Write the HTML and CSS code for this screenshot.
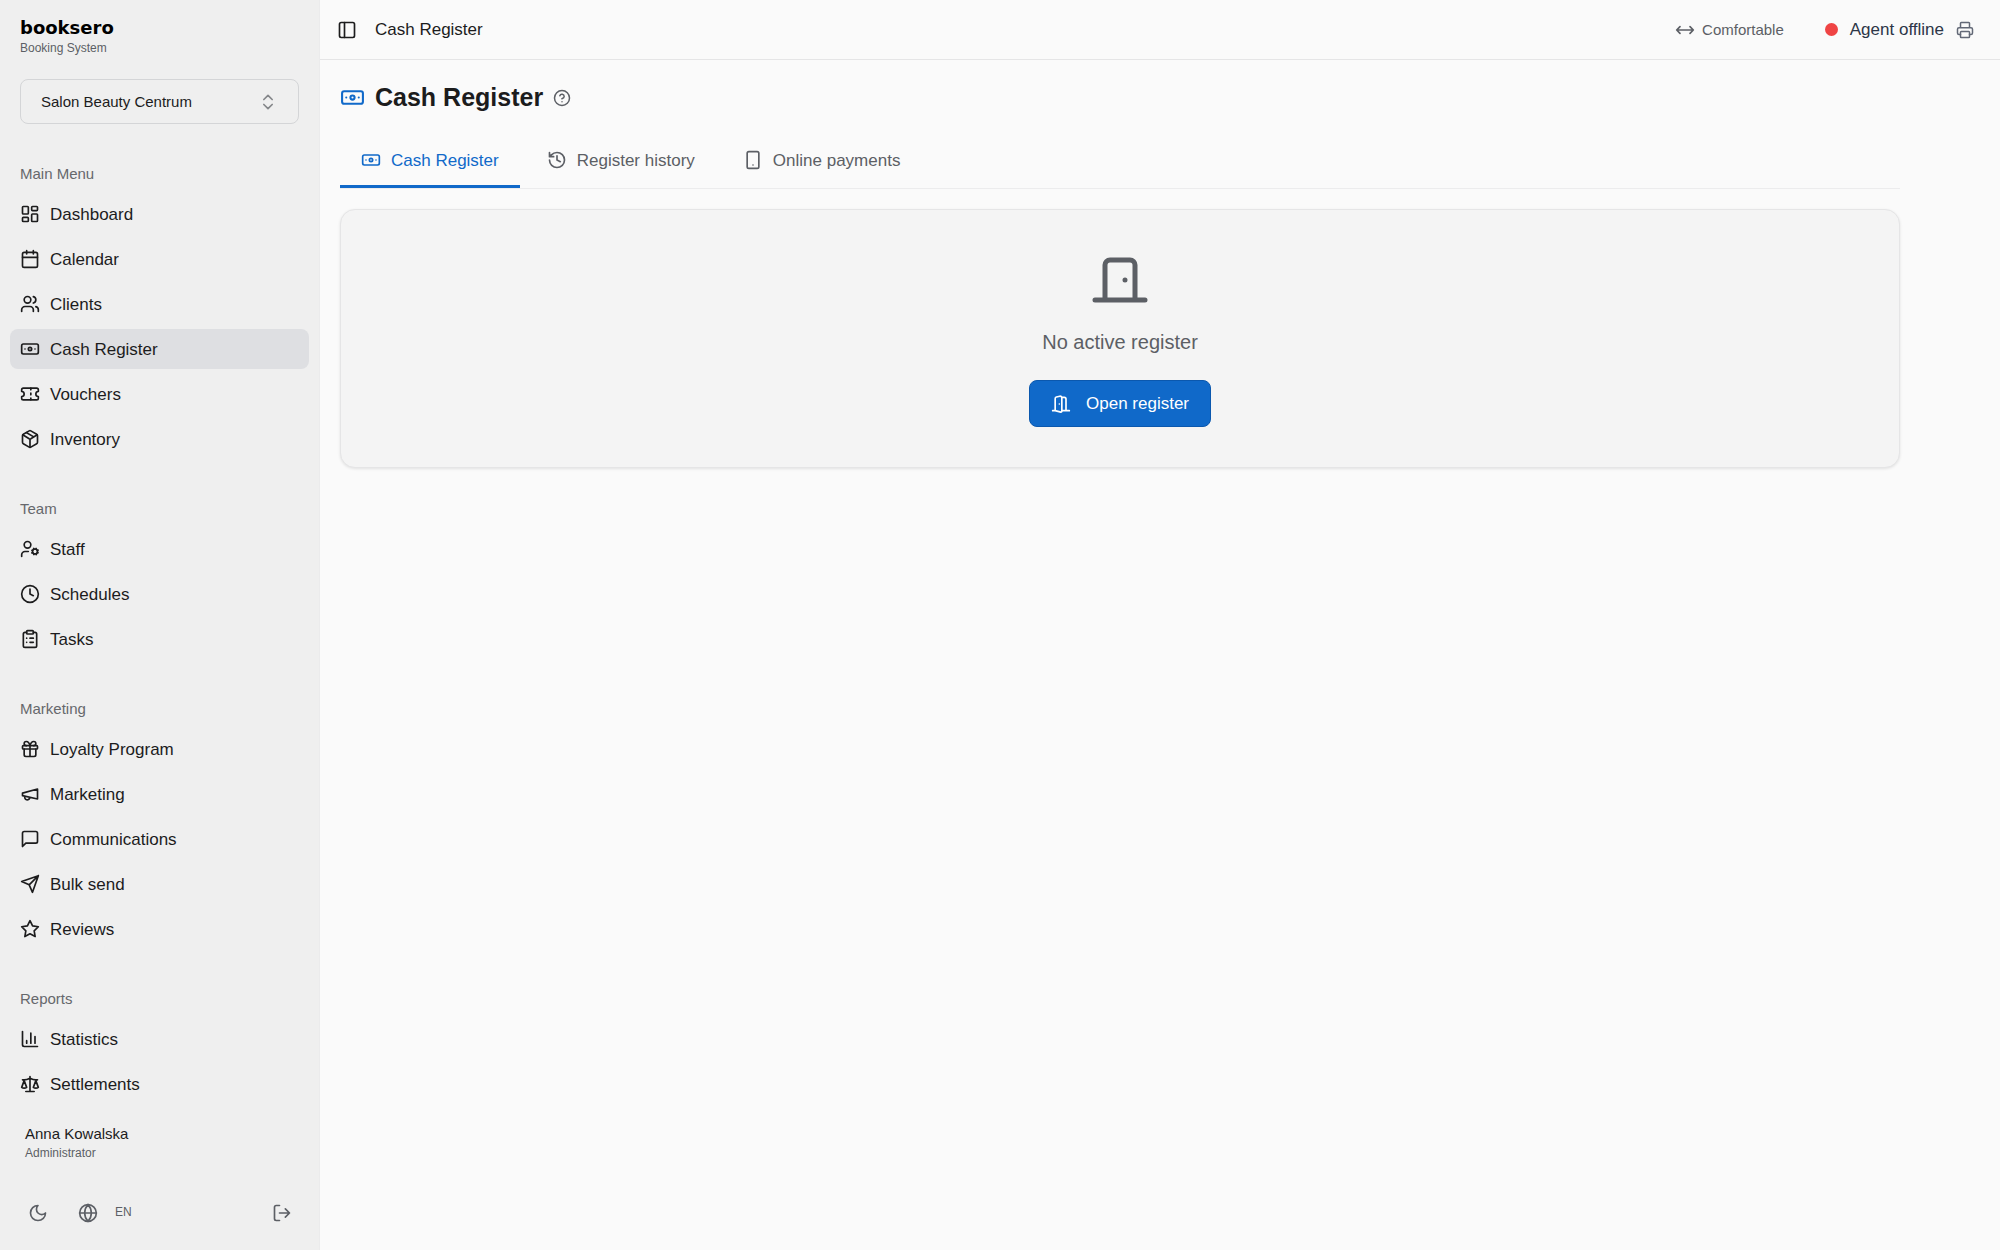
FILE: index.html
```html
<!DOCTYPE html>
<html lang="en">
<head>
<meta charset="utf-8">
<meta name="viewport" content="width=device-width, initial-scale=1">
<title>Cash Register</title>
<link rel="stylesheet" href="styles.css">
</head>
<body>
<svg class="sprite" aria-hidden="true">
  <symbol id="dashboard" viewBox="0 0 24 24"><rect width="7" height="9" x="3" y="3" rx="1"/><rect width="7" height="5" x="14" y="3" rx="1"/><rect width="7" height="9" x="14" y="12" rx="1"/><rect width="7" height="5" x="3" y="16" rx="1"/></symbol>
  <symbol id="calendar" viewBox="0 0 24 24"><path d="M8 2v4M16 2v4M3 10h18"/><rect width="18" height="18" x="3" y="4" rx="2"/></symbol>
  <symbol id="users" viewBox="0 0 24 24"><path d="M16 21v-2a4 4 0 0 0-4-4H6a4 4 0 0 0-4 4v2"/><circle cx="9" cy="7" r="4"/><path d="M22 21v-2a4 4 0 0 0-3-3.87M16 3.13a4 4 0 0 1 0 7.75"/></symbol>
  <symbol id="banknote" viewBox="0 0 24 24"><rect width="20" height="12" x="2" y="6" rx="2"/><circle cx="12" cy="12" r="2"/><path d="M6 12h.01M18 12h.01"/></symbol>
  <symbol id="ticket" viewBox="0 0 24 24"><path d="M2 9a3 3 0 0 1 0 6v2a2 2 0 0 0 2 2h16a2 2 0 0 0 2-2v-2a3 3 0 0 1 0-6V7a2 2 0 0 0-2-2H4a2 2 0 0 0-2 2Z"/><path d="M13 5v2M13 17v2M13 11v2"/></symbol>
  <symbol id="package" viewBox="0 0 24 24"><path d="M11 21.73a2 2 0 0 0 2 0l7-4A2 2 0 0 0 21 16V8a2 2 0 0 0-1-1.73l-7-4a2 2 0 0 0-2 0l-7 4A2 2 0 0 0 3 8v8a2 2 0 0 0 1 1.73z"/><path d="M12 22V12M3.3 7l7.703 4.734a2 2 0 0 0 1.994 0L20.7 7M7.5 4.27l9 5.15"/></symbol>
  <symbol id="user-cog" viewBox="0 0 24 24"><circle cx="18" cy="15" r="3"/><circle cx="9" cy="7" r="4"/><path d="M10 15H6a4 4 0 0 0-4 4v2M21.7 16.4l-.9-.3M15.2 13.9l-.9-.3M16.6 18.7l.3-.9M19.1 12.2l.3-.9M19.6 18.7l-.4-1M16.8 12.3l-.4-1M14.3 16.6l1-.4M20.7 13.8l1-.4"/></symbol>
  <symbol id="clock" viewBox="0 0 24 24"><circle cx="12" cy="12" r="10"/><path d="M12 6v6l4 2"/></symbol>
  <symbol id="clipboard" viewBox="0 0 24 24"><rect width="8" height="4" x="8" y="2" rx="1"/><path d="M16 4h2a2 2 0 0 1 2 2v14a2 2 0 0 1-2 2H6a2 2 0 0 1-2-2V6a2 2 0 0 1 2-2h2M12 11h4M12 16h4M8 11h.01M8 16h.01"/></symbol>
  <symbol id="gift" viewBox="0 0 24 24"><rect x="3" y="8" width="18" height="4" rx="1"/><path d="M12 8v13M19 12v7a2 2 0 0 1-2 2H7a2 2 0 0 1-2-2v-7M7.5 8a2.5 2.5 0 0 1 0-5A4.8 8 0 0 1 12 8a4.8 8 0 0 1 4.5-5 2.5 2.5 0 0 1 0 5"/></symbol>
  <symbol id="megaphone" viewBox="0 0 24 24"><path d="m3 11 18-5v12L3 14v-3zM11.6 16.8a3 3 0 1 1-5.8-1.6"/></symbol>
  <symbol id="message" viewBox="0 0 24 24"><path d="M21 15a2 2 0 0 1-2 2H7l-4 4V5a2 2 0 0 1 2-2h14a2 2 0 0 1 2 2z"/></symbol>
  <symbol id="send" viewBox="0 0 24 24"><path d="m22 2-7 20-4-9-9-4ZM22 2 11 13"/></symbol>
  <symbol id="star" viewBox="0 0 24 24"><path d="m12 2 3.09 6.26L22 9.27l-5 4.87 1.18 6.88L12 17.77l-6.18 3.25L7 14.14 2 9.27l6.91-1.01Z"/></symbol>
  <symbol id="chart" viewBox="0 0 24 24"><path d="M3 3v16a2 2 0 0 0 2 2h16M18 17V9M13 17V5M8 17v-3"/></symbol>
  <symbol id="scale" viewBox="0 0 24 24"><path d="m16 16 3-8 3 8c-.87.65-1.92 1-3 1s-2.13-.35-3-1ZM2 16l3-8 3 8c-.87.65-1.92 1-3 1s-2.13-.35-3-1ZM7 21h10M12 3v18M3 7h2c2 0 5-1 7-2 2 1 5 2 7 2h2"/></symbol>
  <symbol id="chevrons" viewBox="0 0 24 24"><path d="m7 15 5 5 5-5M7 9l5-5 5 5"/></symbol>
  <symbol id="moon" viewBox="0 0 24 24"><path d="M12 3a6 6 0 0 0 9 9 9 9 0 1 1-9-9Z"/></symbol>
  <symbol id="globe" viewBox="0 0 24 24"><circle cx="12" cy="12" r="10"/><path d="M12 2a14.5 14.5 0 0 0 0 20 14.5 14.5 0 0 0 0-20M2 12h20"/></symbol>
  <symbol id="logout" viewBox="0 0 24 24"><path d="M9 21H5a2 2 0 0 1-2-2V5a2 2 0 0 1 2-2h4M16 17l5-5-5-5M21 12H9"/></symbol>
  <symbol id="panel" viewBox="0 0 24 24"><rect width="18" height="18" x="3" y="3" rx="2"/><path d="M9 3v18"/></symbol>
  <symbol id="width" viewBox="0 0 24 24"><path d="m18 8 4 4-4 4M2 12h20M6 8l-4 4 4 4"/></symbol>
  <symbol id="printer" viewBox="0 0 24 24"><path d="M6 18H4a2 2 0 0 1-2-2v-5a2 2 0 0 1 2-2h16a2 2 0 0 1 2 2v5a2 2 0 0 1-2 2h-2M6 9V3a1 1 0 0 1 1-1h10a1 1 0 0 1 1 1v6"/><rect x="6" y="14" width="12" height="8" rx="1"/></symbol>
  <symbol id="help" viewBox="0 0 24 24"><circle cx="12" cy="12" r="10"/><path d="M9.09 9a3 3 0 0 1 5.83 1c0 2-3 3-3 3M12 17h.01"/></symbol>
  <symbol id="history" viewBox="0 0 24 24"><path d="M3 12a9 9 0 1 0 9-9 9.75 9.75 0 0 0-6.74 2.74L3 8M3 3v5h5M12 7v5l4 2"/></symbol>
  <symbol id="phone" viewBox="0 0 24 24"><rect width="14" height="20" x="5" y="2" rx="2"/><path d="M12 18h.01"/></symbol>
  <symbol id="door-closed" viewBox="0 0 24 24"><path d="M18 20V6a2 2 0 0 0-2-2H8a2 2 0 0 0-2 2v14M2 20h20M14 12v.01"/></symbol>
  <symbol id="door-open" viewBox="0 0 24 24"><path d="M13 4h3a2 2 0 0 1 2 2v14M2 20h3M13 20h9M10 12v.01M13 4.562v16.157a1 1 0 0 1-1.242.97L5 20V5.562a2 2 0 0 1 1.515-1.94l4-1A2 2 0 0 1 13 4.561Z"/></symbol>
</svg>

<div class="app">
  <aside class="sidebar">
    <div class="brand">
      <span class="brand-name">booksero</span>
      <span class="brand-sub">Booking System</span>
    </div>
    <div class="salon">
      <select class="salon-select" aria-label="Salon"><option>Salon Beauty Centrum</option></select>
      <svg class="icon salon-icon"><use href="#chevrons"/></svg>
    </div>
    <nav class="nav" aria-label="Main">
      <section class="group">
        <h2 class="group-title">Main Menu</h2>
        <ul class="group-list">
          <li><a class="nav-link" href="#"><svg class="icon"><use href="#dashboard"/></svg>Dashboard</a></li>
          <li><a class="nav-link" href="#"><svg class="icon"><use href="#calendar"/></svg>Calendar</a></li>
          <li><a class="nav-link" href="#"><svg class="icon"><use href="#users"/></svg>Clients</a></li>
          <li><a class="nav-link active" href="#" aria-current="page"><svg class="icon"><use href="#banknote"/></svg>Cash Register</a></li>
          <li><a class="nav-link" href="#"><svg class="icon"><use href="#ticket"/></svg>Vouchers</a></li>
          <li><a class="nav-link" href="#"><svg class="icon"><use href="#package"/></svg>Inventory</a></li>
        </ul>
      </section>
      <section class="group">
        <h2 class="group-title">Team</h2>
        <ul class="group-list">
          <li><a class="nav-link" href="#"><svg class="icon"><use href="#user-cog"/></svg>Staff</a></li>
          <li><a class="nav-link" href="#"><svg class="icon"><use href="#clock"/></svg>Schedules</a></li>
          <li><a class="nav-link" href="#"><svg class="icon"><use href="#clipboard"/></svg>Tasks</a></li>
        </ul>
      </section>
      <section class="group">
        <h2 class="group-title">Marketing</h2>
        <ul class="group-list">
          <li><a class="nav-link" href="#"><svg class="icon"><use href="#gift"/></svg>Loyalty Program</a></li>
          <li><a class="nav-link" href="#"><svg class="icon"><use href="#megaphone"/></svg>Marketing</a></li>
          <li><a class="nav-link" href="#"><svg class="icon"><use href="#message"/></svg>Communications</a></li>
          <li><a class="nav-link" href="#"><svg class="icon"><use href="#send"/></svg>Bulk send</a></li>
          <li><a class="nav-link" href="#"><svg class="icon"><use href="#star"/></svg>Reviews</a></li>
        </ul>
      </section>
      <section class="group">
        <h2 class="group-title">Reports</h2>
        <ul class="group-list">
          <li><a class="nav-link" href="#"><svg class="icon"><use href="#chart"/></svg>Statistics</a></li>
          <li><a class="nav-link" href="#"><svg class="icon"><use href="#scale"/></svg>Settlements</a></li>
        </ul>
      </section>
    </nav>
    <footer class="side-footer">
      <div class="user">
        <span class="user-name">Anna Kowalska</span>
        <span class="user-role">Administrator</span>
      </div>
      <div class="side-actions">
        <button class="side-button" type="button" aria-label="Dark mode"><svg class="icon"><use href="#moon"/></svg></button>
        <button class="side-button language" type="button" aria-label="Language: EN"><svg class="icon"><use href="#globe"/></svg>EN</button>
        <button class="side-button logout" type="button" aria-label="Log out"><svg class="icon"><use href="#logout"/></svg></button>
      </div>
    </footer>
  </aside>

  <div class="content">
    <header class="topbar">
      <button class="toggle" type="button" aria-label="Toggle sidebar"><svg class="icon"><use href="#panel"/></svg></button>
      <span class="crumb">Cash Register</span>
      <button class="density" type="button"><svg class="icon"><use href="#width"/></svg>Comfortable</button>
      <button class="agent" type="button"><span class="dot"></span>Agent offline<svg class="icon small"><use href="#printer"/></svg></button>
    </header>
    <main class="page">
      <div class="heading">
        <svg class="icon large"><use href="#banknote"/></svg>
        <h1 class="title">Cash Register</h1>
        <button class="help" type="button" aria-label="Help"><svg class="icon small"><use href="#help"/></svg></button>
      </div>
      <div class="tabs" role="tablist">
        <button class="tab selected" type="button" role="tab" aria-selected="true"><svg class="icon"><use href="#banknote"/></svg>Cash Register</button>
        <button class="tab" type="button" role="tab" aria-selected="false"><svg class="icon"><use href="#history"/></svg>Register history</button>
        <button class="tab" type="button" role="tab" aria-selected="false"><svg class="icon"><use href="#phone"/></svg>Online payments</button>
      </div>
      <section class="card" role="tabpanel">
        <svg class="icon huge"><use href="#door-closed"/></svg>
        <p class="message">No active register</p>
        <button class="primary" type="button"><svg class="icon"><use href="#door-open"/></svg>Open register</button>
      </section>
    </main>
  </div>
</div>
</body>
</html>
```
FILE: styles.css
```css
:root {
  --text: #1c1c1d;
  --muted: #5c5f65;
  --primary: #1069c9;
  --border: #e5e5e6;
}

* {
  box-sizing: border-box;
}

body {
  margin: 0;
  background: #fafafa;
  color: var(--text);
  font: 17px/25px "Liberation Sans", Arial, sans-serif;
}

button,
select {
  margin: 0;
  padding: 0;
  border: 0;
  background: none;
  color: inherit;
  font: inherit;
}

.sprite {
  display: none;
}

.icon {
  flex: none;
  width: 20px;
  height: 20px;
  fill: none;
  stroke: currentColor;
  stroke-width: 2;
  stroke-linecap: round;
  stroke-linejoin: round;
}

.small {
  width: 18px;
  height: 18px;
}

.large {
  width: 25px;
  height: 25px;
}

.huge {
  width: 60px;
  height: 60px;
}

.app {
  display: grid;
  grid-template-columns: 320px minmax(0, 1fr);
  min-height: 100vh;
}

/* Sidebar */

.sidebar {
  position: sticky;
  top: 0;
  display: flex;
  flex-direction: column;
  height: 100vh;
  background: #efefef;
  border-right: 1px solid #ebebec;
}

.brand {
  display: flex;
  flex-direction: column;
  padding: 18px 20px 0;
}

.brand-name {
  color: #000;
  font: bold 18px/20px "DejaVu Sans", sans-serif;
}

.brand-sub {
  color: var(--muted);
  font-size: 12px;
  line-height: 20px;
}

.salon {
  display: grid;
  align-items: center;
  margin: 21px 20px 0;
}

.salon-select {
  grid-area: 1 / 1;
  height: 45px;
  padding: 0 50px 0 20px;
  border: 1px solid #d4d5d7;
  border-radius: 8px;
  appearance: none;
  font-size: 15px;
}

.salon-icon {
  grid-area: 1 / 1;
  justify-self: end;
  margin-right: 21px;
  color: #85878a;
  pointer-events: none;
}

.nav {
  display: flex;
  flex: 1;
  flex-direction: column;
  gap: 30px;
  min-height: 0;
  margin-top: 20px;
  padding: 10px 10px 0;
  overflow: hidden;
}

.group-title {
  margin: 0;
  padding: 0 10px;
  color: #66686c;
  font-size: 15px;
  font-weight: 400;
  line-height: 40px;
}

.group-list {
  display: flex;
  flex-direction: column;
  gap: 5px;
  margin: 0;
  padding: 0;
  list-style: none;
}

.nav-link {
  display: flex;
  align-items: center;
  gap: 10px;
  height: 40px;
  padding: 0 10px;
  border-radius: 8px;
  color: inherit;
  text-decoration: none;
}

.nav-link.active {
  background: #dedfe2;
}

.side-footer {
  padding: 15px;
}

.user {
  display: flex;
  flex-direction: column;
  padding: 0 10px;
}

.user-name {
  font-size: 15px;
  line-height: 20px;
}

.user-role {
  color: var(--muted);
  font-size: 12px;
  line-height: 18px;
}

.side-actions {
  display: flex;
  align-items: center;
  margin-top: 28px;
  color: var(--muted);
}

.side-button {
  display: flex;
  align-items: center;
  justify-content: center;
  width: 45px;
  height: 45px;
}

.language {
  gap: 17px;
  width: auto;
  padding: 0 18px;
  font-size: 12px;
}

.logout {
  margin-left: auto;
}

/* Top bar */

.content {
  min-width: 0;
}

.topbar {
  display: flex;
  align-items: center;
  height: 60px;
  padding: 0 26px 0 17px;
  border-bottom: 1px solid var(--border);
}

.toggle,
.help {
  display: flex;
}

.crumb {
  margin-left: 18px;
}

.density {
  display: flex;
  align-items: center;
  gap: 7px;
  margin-left: auto;
  color: var(--muted);
  font-size: 15px;
}

.agent {
  display: flex;
  align-items: center;
  gap: 12px;
  margin-left: 41px;
  color: #2c3648;
}

.agent .icon {
  color: #626876;
}

.dot {
  width: 13px;
  height: 13px;
  border-radius: 50%;
  background: #ef4444;
}

/* Page */

.page {
  max-width: 1600px;
  padding: 20px;
}

.heading {
  display: flex;
  align-items: center;
  gap: 10px;
  color: var(--primary);
}

.title {
  margin: 0;
  color: var(--text);
  font-size: 25px;
  line-height: 35px;
}

.help {
  color: var(--muted);
}

.tabs {
  display: flex;
  gap: 6px;
  margin-top: 18px;
  border-bottom: 1px solid #ececed;
}

.tab {
  display: flex;
  align-items: center;
  gap: 10px;
  height: 55px;
  padding: 2px 21px 0;
  border-bottom: 3px solid transparent;
  color: var(--muted);
}

.tab.selected {
  border-color: var(--primary);
  color: var(--primary);
}

.card {
  display: flex;
  flex-direction: column;
  align-items: center;
  margin-top: 20px;
  padding: 40px;
  border: 1px solid var(--border);
  border-radius: 15px;
  background: #f4f4f4;
  box-shadow: 0 1px 3px #0000001a;
  color: var(--muted);
}

.message {
  margin: 20px 0 25px;
  font-size: 20px;
  line-height: 25px;
}

.primary {
  display: flex;
  align-items: center;
  gap: 15px;
  height: 47px;
  padding: 0 21px;
  border: 1px solid #0b58ae;
  border-radius: 8px;
  background: var(--primary);
  color: #fff;
}
```
